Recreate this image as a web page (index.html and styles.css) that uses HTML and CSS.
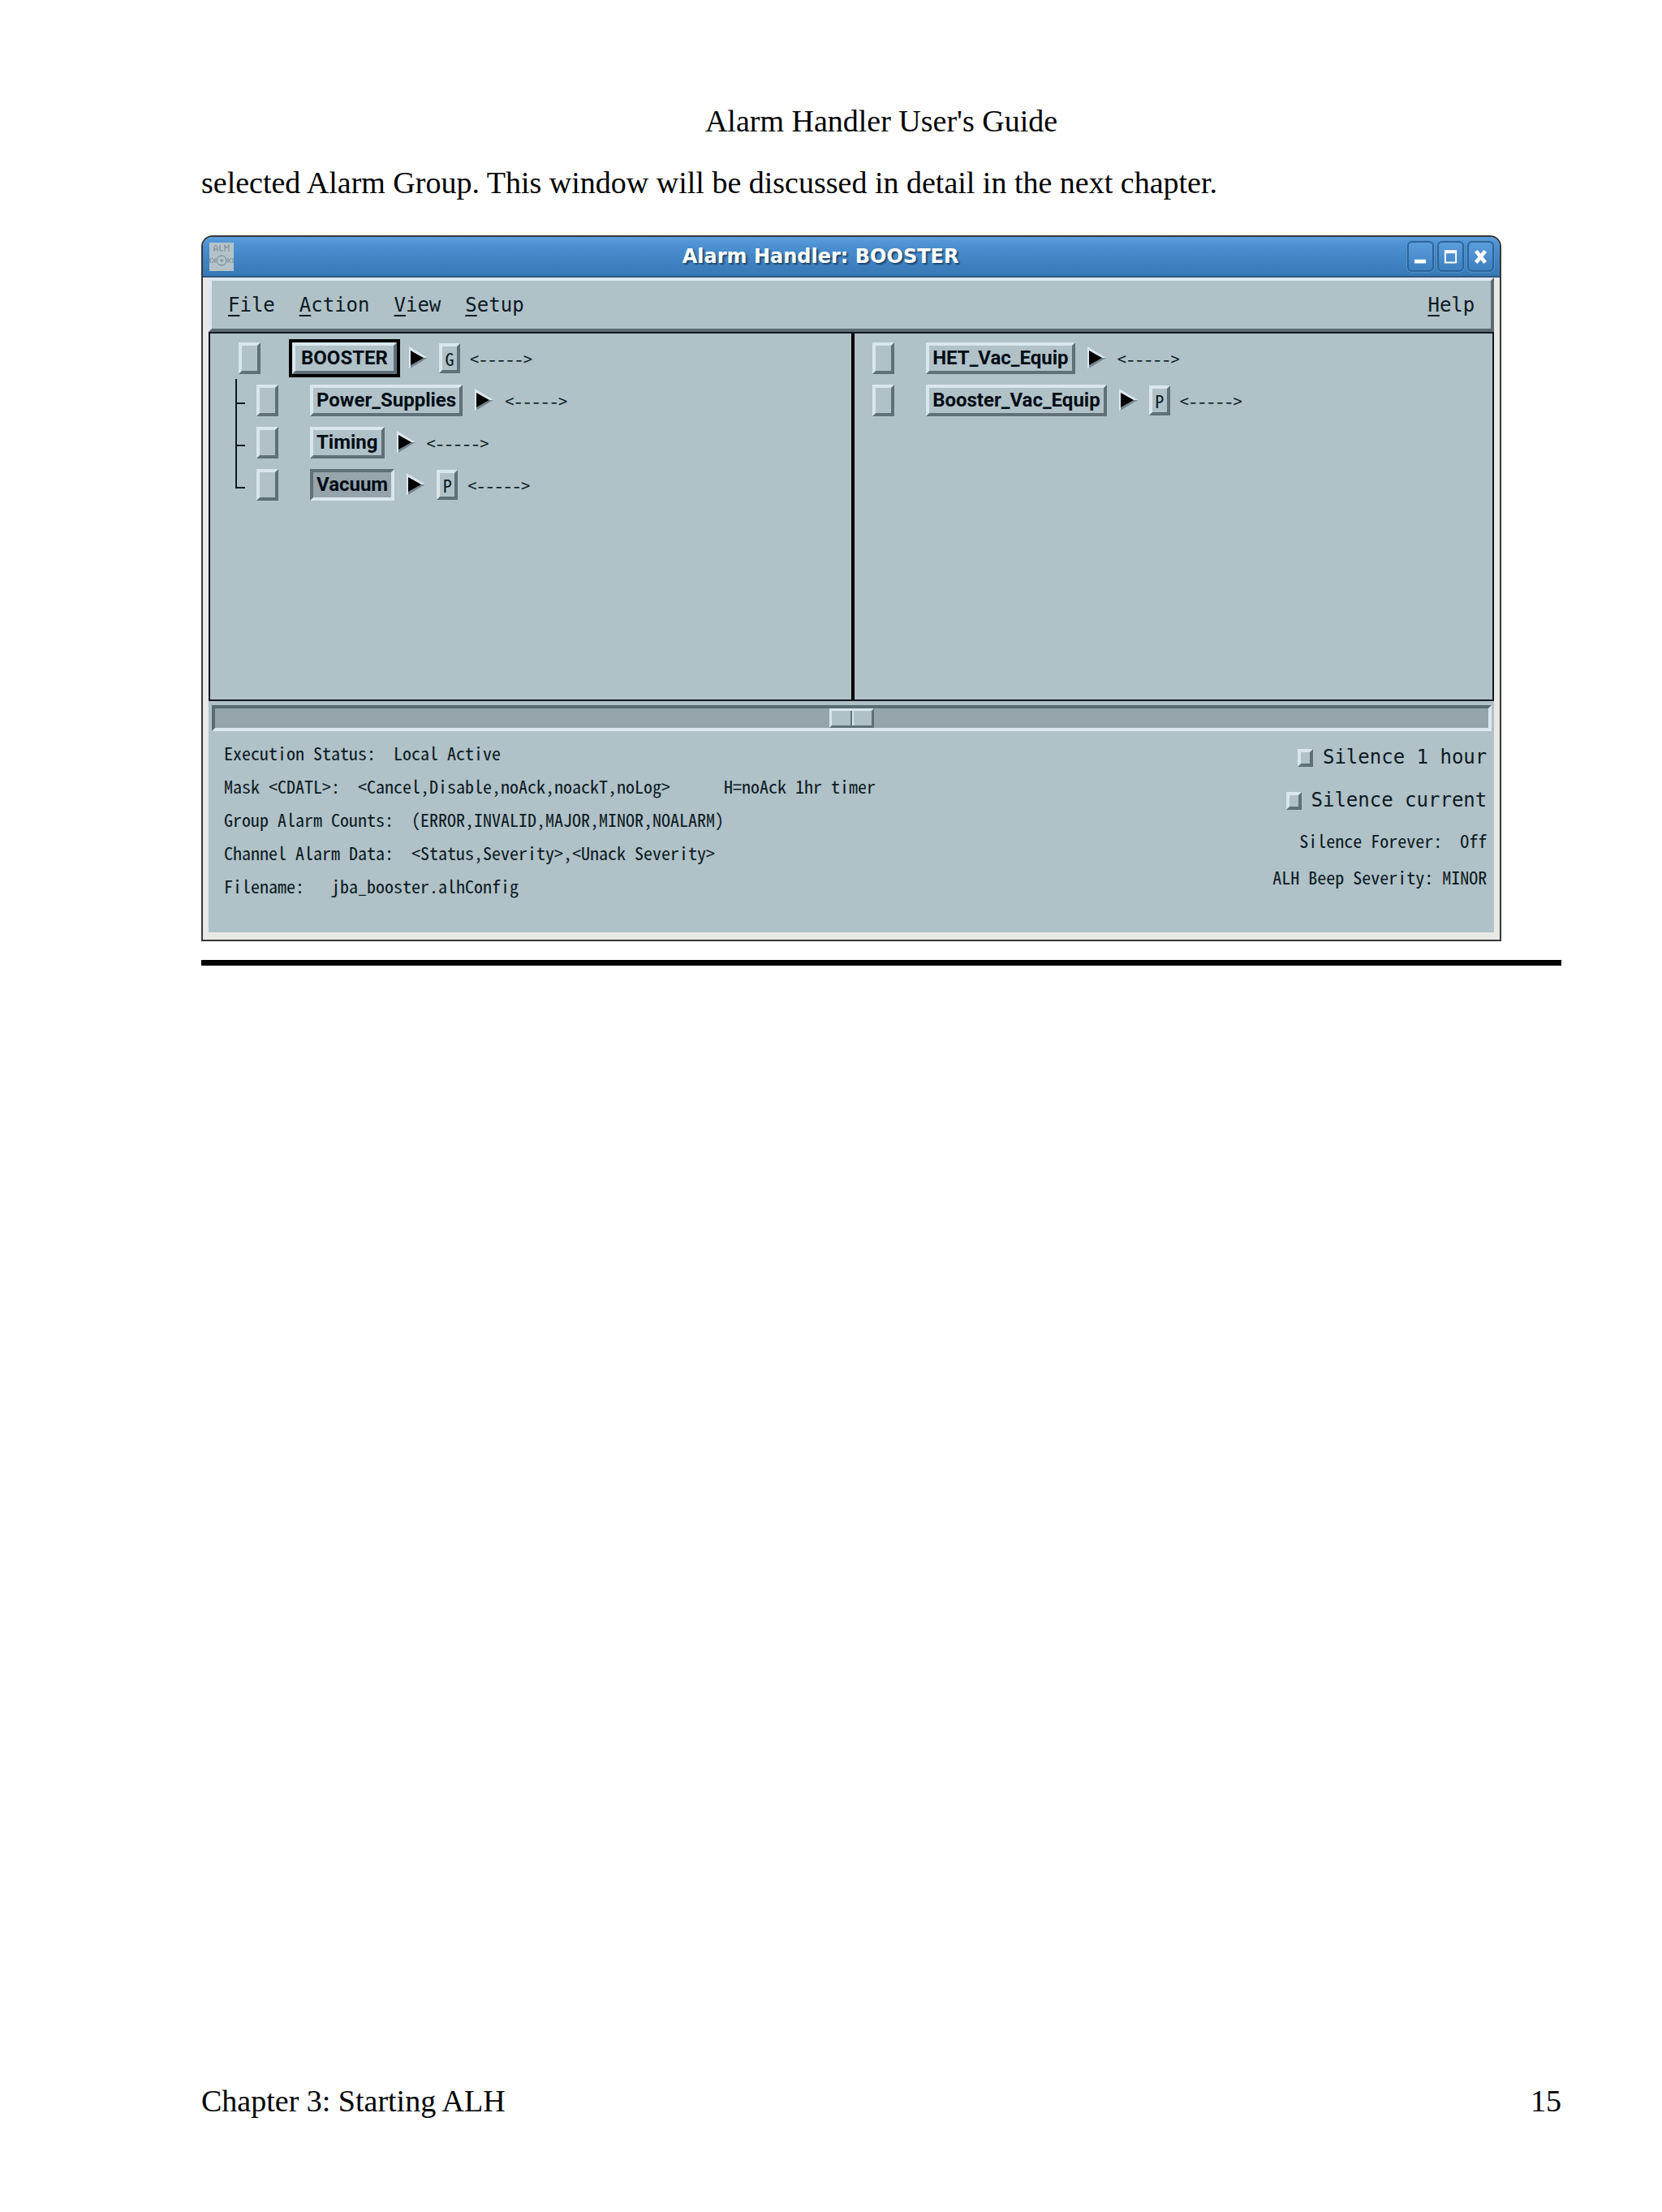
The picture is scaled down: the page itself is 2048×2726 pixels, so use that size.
FILE: index.html
```html
<!DOCTYPE html>
<html lang="en">
<head>
    <meta charset="UTF-8">
    <meta name="viewport" content="width=device-width, initial-scale=1.0">
    <title>Alarm Handler User's Guide</title>
    <link rel="stylesheet" href="styles.css">
</head>
<body>

<svg class="defs" width="0" height="0" aria-hidden="true">
    <symbol id="arrow" viewBox="0 0 24 28">
        <path d="M1 0 L24 14 L1 28 Z" fill="#dde8ee"/>
        <path d="M1 28 L24 14 L3 14 L3 26 Z" fill="#75858d"/>
        <path d="M3 5 L19 14 L3 23 Z" fill="#000"/>
    </symbol>
</svg>

<header class="page_header">Alarm Handler User's Guide</header>

<main>
    <p class="intro">selected Alarm Group. This window will be discussed in detail in the next chapter.</p>

    <section class="window">
        <div class="titlebar">
            <svg class="app_icon" viewBox="0 0 30 35" aria-hidden="true">
                <rect width="30" height="35" fill="#b3c3c9"/>
                <path d="M6 11 V5 L8 3 L10 5 V11 M6 8 H10 M13 3 V10 H17 M19 11 V3 L21 7 L24 3 V11" fill="none" stroke="#74868e" stroke-width="1"/>
                <circle cx="15" cy="22" r="6" fill="none" stroke="#6d7f87"/>
                <path d="M1 19 V25 M3 19 L6 22 L3 25 M7 19 V25 M23 19 V25 M27 19 L24 22 L27 25 M29 19 V25 M15 20 V24 M13 22 H17" fill="none" stroke="#74868e"/>
            </svg>
            <h1 class="title">Alarm Handler: BOOSTER</h1>
            <div class="controls">
                <button class="control" aria-label="Minimize">
                    <svg viewBox="0 0 30 36"><rect x="7" y="22" width="15" height="5" fill="#fff"/></svg>
                </button>
                <button class="control" aria-label="Maximize">
                    <svg viewBox="0 0 30 36"><path d="M8 11 H22 V26 H8 Z" fill="none" stroke="#fff" stroke-width="2"/><rect x="7" y="10" width="16" height="4" fill="#fff"/></svg>
                </button>
                <button class="control" aria-label="Close">
                    <svg viewBox="0 0 30 36"><path d="M9 11 L21 26 M21 11 L9 26" fill="none" stroke="#fff" stroke-width="5"/></svg>
                </button>
            </div>
        </div>

        <div class="client">
            <nav class="menubar">
                <button class="menu"><u>F</u>ile</button>
                <button class="menu"><u>A</u>ction</button>
                <button class="menu"><u>V</u>iew</button>
                <button class="menu"><u>S</u>etup</button>
                <button class="menu help"><u>H</u>elp</button>
            </nav>

            <div class="panes">
                <div class="pane">
                    <div class="row root">
                        <button class="status" aria-label="BOOSTER severity"></button>
                        <button class="name current">BOOSTER</button>
                        <svg class="arrow"><use href="#arrow"/></svg>
                        <button class="tag">G</button>
                        <span class="mask">&lt;-----&gt;</span>
                    </div>
                    <div class="row">
                        <span class="branch"></span>
                        <button class="status" aria-label="Power_Supplies severity"></button>
                        <button class="name">Power_Supplies</button>
                        <svg class="arrow"><use href="#arrow"/></svg>
                        <span class="mask">&lt;-----&gt;</span>
                    </div>
                    <div class="row">
                        <span class="branch"></span>
                        <button class="status" aria-label="Timing severity"></button>
                        <button class="name">Timing</button>
                        <svg class="arrow"><use href="#arrow"/></svg>
                        <span class="mask">&lt;-----&gt;</span>
                    </div>
                    <div class="row">
                        <span class="branch last"></span>
                        <button class="status" aria-label="Vacuum severity"></button>
                        <button class="name selected">Vacuum</button>
                        <svg class="arrow"><use href="#arrow"/></svg>
                        <button class="tag">P</button>
                        <span class="mask">&lt;-----&gt;</span>
                    </div>
                </div>
                <div class="pane contents">
                    <div class="row">
                        <button class="status" aria-label="HET_Vac_Equip severity"></button>
                        <button class="name">HET_Vac_Equip</button>
                        <svg class="arrow"><use href="#arrow"/></svg>
                        <span class="mask">&lt;-----&gt;</span>
                    </div>
                    <div class="row">
                        <button class="status" aria-label="Booster_Vac_Equip severity"></button>
                        <button class="name">Booster_Vac_Equip</button>
                        <svg class="arrow"><use href="#arrow"/></svg>
                        <button class="tag">P</button>
                        <span class="mask">&lt;-----&gt;</span>
                    </div>
                </div>
            </div>

            <input class="splitter" type="range" min="0" max="100" value="50" aria-label="Pane width">

            <div class="message_area">
                <div class="legend">
                    <div>Execution Status:  Local Active</div>
                    <div>Mask &lt;CDATL&gt;:  &lt;Cancel,Disable,noAck,noackT,noLog&gt;      H=noAck 1hr timer</div>
                    <div>Group Alarm Counts:  (ERROR,INVALID,MAJOR,MINOR,NOALARM)</div>
                    <div>Channel Alarm Data:  &lt;Status,Severity&gt;,&lt;Unack Severity&gt;</div>
                    <div>Filename:   jba_booster.alhConfig</div>
                </div>
                <div class="silence">
                    <label class="toggle"><input type="checkbox">Silence 1 hour</label>
                    <label class="toggle"><input type="checkbox">Silence current</label>
                    <div class="setting">Silence Forever:  Off</div>
                    <div class="setting">ALH Beep Severity: MINOR</div>
                </div>
            </div>
        </div>
    </section>

    <hr>
</main>

<footer class="page_footer">
    <span>Chapter 3: Starting ALH</span>
    <span>15</span>
</footer>

</body>
</html>
```
FILE: styles.css
```css
* {
    box-sizing: border-box;
}

body {
    display: flex;
    flex-direction: column;
    min-height: 100vh;
    margin: 0;
    padding: 127px 124px 115px 248px;
    background: #FFFFFF;
    color: #000000;
    font-family: "Liberation Serif", "Times New Roman", serif;
    font-size: 38px;
    line-height: 44px;
}

.defs {
    position: absolute;
}

button {
    margin: 0;
    padding: 0;
    border: 0;
    background: none;
    color: inherit;
    font: inherit;
}

main {
    flex: 1;
}

.page_header {
    text-align: center;
}

.intro {
    margin: 32px 0 43px;
}

hr {
    height: 7px;
    margin: 23px 0 0;
    border: 0;
    background: #000000;
}

.page_footer {
    display: flex;
    justify-content: space-between;
}

/* Window frame */
.window {
    width: 95.6%;
    padding: 0 7px 9px;
    border: 2px solid #34383A;
    border-radius: 14px 14px 0 0;
    background: #E8E8E5;
    color: #0C1A22;
    font-family: "Noto Sans Mono CJK SC", "Liberation Mono", monospace;
    font-size: 22px;
    line-height: 26px;
}

.titlebar {
    display: flex;
    align-items: center;
    height: 50px;
    margin: 0 -7px;
    padding: 0 7px 0 8px;
    border-bottom: 2px solid #2F587F;
    border-radius: 12px 12px 0 0;
    background: linear-gradient(#5B9EDE, #4A8FD0 25%, #3878B6);
}

.app_icon {
    width: 30px;
    height: 35px;
}

.title {
    flex: 1;
    margin: 0;
    color: #FFFFFF;
    font-family: "DejaVu Sans", sans-serif;
    font-size: 24px;
    font-weight: bold;
    text-align: center;
    text-shadow: 2px 2px 2px #1F4468;
}

.controls {
    display: flex;
    gap: 4px;
}

.control {
    width: 33px;
    height: 38px;
    border: 2px solid #2D659A;
    border-radius: 6px;
    background: linear-gradient(#5B9DDC, #3D7FC0);
    box-shadow: 0 0 0 1px #5592CB;
}

.control svg {
    display: block;
    width: 100%;
    height: 100%;
}

.client {
    background: #B0C1C8;
}

/* Menu bar */
.menubar {
    display: flex;
    align-items: center;
    gap: 30px;
    height: 67px;
    padding: 0 20px;
    border: 4px solid;
    border-color: #DCE7EF #5B6B72 #5B6B72 #DCE7EF;
}

.menu, .toggle {
    font-family: "DejaVu Sans Mono", monospace;
    font-size: 24px;
}

.menu u {
    text-decoration-thickness: 2px;
    text-underline-offset: 4px;
}

.help {
    margin-left: auto;
}

/* Group tree and group contents */
.panes {
    display: grid;
    grid-template-columns: 1fr 1fr;
    height: 455px;
    border: 2px solid #10181E;
}

.pane {
    padding: 4px 0 0 31px;
}

.contents {
    padding-left: 22px;
    border-left: 4px solid #000000;
}

.row {
    display: flex;
    align-items: center;
    height: 52px;
}

.root {
    padding-left: 4px;
}

.branch {
    display: flex;
    flex-direction: column;
    align-self: stretch;
    width: 12px;
    margin-right: 14px;
}

.branch::before {
    content: "";
    height: 29px;
    border-left: 2px solid #0C1A22;
    border-bottom: 2px solid #0C1A22;
}

.branch::after {
    content: "";
    flex: 1;
    border-left: 2px solid #0C1A22;
}

.last::after {
    border: 0;
}

.status, .name, .tag {
    border: 4px solid;
    border-color: #D9E6EC #5F7078 #5F7078 #D9E6EC;
}

.status {
    width: 27px;
    height: 39px;
    margin-right: 39px;
}

.name {
    height: 39px;
    padding: 0 4px;
    color: #000C14;
    font-family: Roboto, "Liberation Sans", sans-serif;
    font-size: 24px;
    font-weight: bold;
}

.current {
    padding: 0 7px;
    outline: 4px solid #000000;
}

.selected {
    border-color: #5F7078 #D9E6EC #D9E6EC #5F7078;
    background: #96A4AC;
}

.arrow {
    width: 24px;
    height: 28px;
    margin: 0 14px;
}

.tag {
    width: 26px;
    height: 37px;
    margin-right: 12px;
}

/* Sash between the panes */
.splitter {
    appearance: none;
    display: block;
    width: calc(100% - 7px);
    height: 32px;
    margin: 5px 3px 0 4px;
    border: 4px solid;
    border-color: #5B6B72 #DCE7EF #DCE7EF #5B6B72;
    background: #96A4AB;
}

.splitter::-webkit-slider-thumb {
    appearance: none;
    width: 55px;
    height: 24px;
    border: 3px solid;
    border-color: #D9E6EC #5F7078 #5F7078 #D9E6EC;
    background: linear-gradient(90deg, #B0C0C7 23px, #5F7078 23px, #5F7078 25px, #D9E6EC 25px, #D9E6EC 27px, #B0C0C7 27px);
}

/* Messages under the panes */
.message_area {
    display: flex;
    justify-content: space-between;
    height: 248px;
    padding: 6px 9px 0 19px;
}

.legend div, .toggle, .setting {
    white-space: pre;
}

.legend {
    line-height: 41px;
}

.silence {
    display: flex;
    flex-direction: column;
    align-items: flex-end;
}

.toggle {
    display: flex;
    align-items: center;
    gap: 12px;
    line-height: 53px;
}

.toggle input {
    appearance: none;
    width: 19px;
    height: 22px;
    margin: 0;
    border: 4px solid;
    border-color: #D9E6EC #5F7078 #5F7078 #D9E6EC;
}

.setting {
    line-height: 45px;
}
```
